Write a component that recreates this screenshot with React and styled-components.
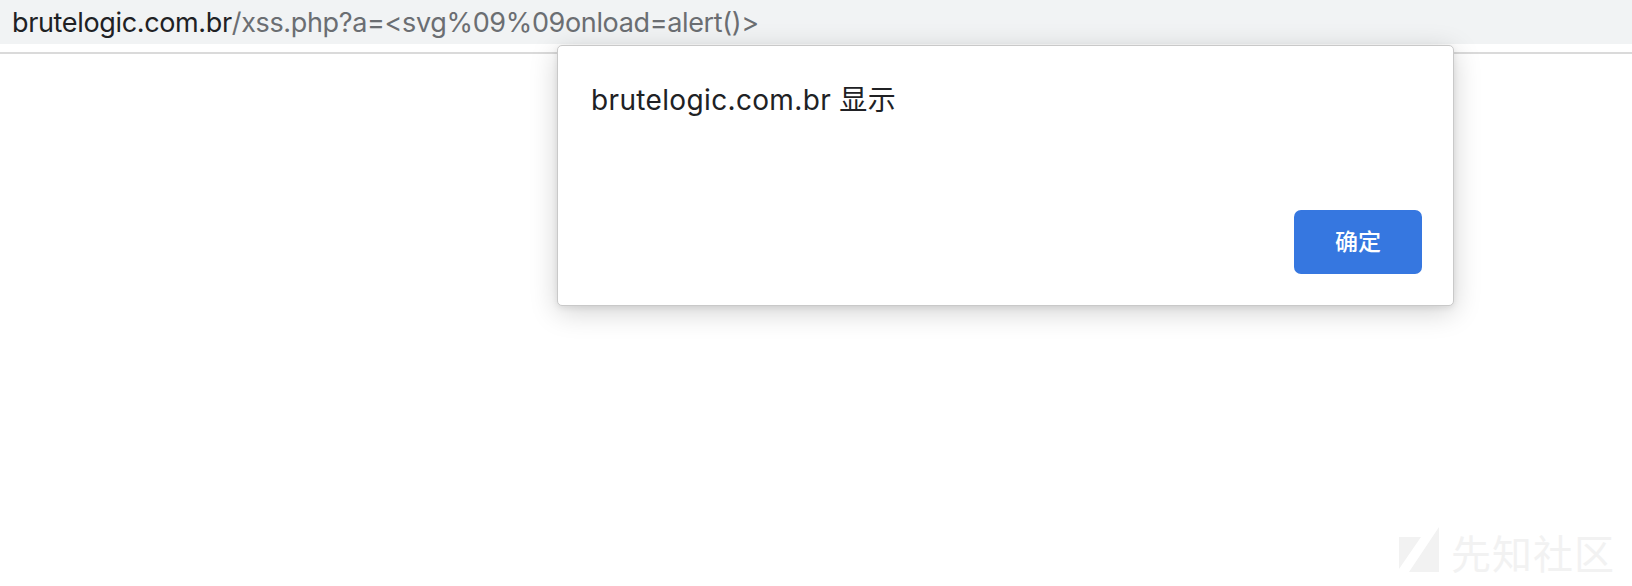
import React from 'react';
import styled, { createGlobalStyle } from 'styled-components';

const GlobalStyle = createGlobalStyle`
    html, body {
        margin: 0;
        padding: 0;
        background: #ffffff;
    }
    body {
        width: 1632px;
        height: 586px;
        overflow: hidden;
        font-family: Inter, "Noto Sans CJK SC", sans-serif;
    }
`;

const Page = styled.div`
    position: relative;
    width: 1632px;
    height: 586px;
    display: flex;
    flex-direction: column;
`;

const AddressBar = styled.div`
    height: 44px;
    background: #f1f3f4;
    display: flex;
    align-items: center;
    padding-left: 12px;
    font-size: 27px;
    letter-spacing: -0.35px;
    color: #6b6e72;
    white-space: nowrap;
`;

const Host = styled.span`
    color: #202124;
`;

const Divider = styled.div`
    margin-top: 8px;
    height: 2px;
    background: #dadada;
`;

const Dialog = styled.div`
    position: absolute;
    left: 557px;
    top: 45px;
    width: 897px;
    height: 261px;
    box-sizing: border-box;
    background: #ffffff;
    border: 1px solid #c9c9c9;
    border-radius: 5px;
    box-shadow: 0 6px 28px rgba(0, 0, 0, 0.18), 0 2px 6px rgba(0, 0, 0, 0.08);
    padding: 37px 31px 31px 33px;
    display: flex;
    flex-direction: column;
    justify-content: space-between;
`;

const Title = styled.div`
    font-size: 28px;
    line-height: 34px;
    letter-spacing: 0.35px;
    color: #202124;
`;

const Actions = styled.div`
    display: flex;
    justify-content: flex-end;
`;

const OkButton = styled.button`
    width: 128px;
    height: 64px;
    padding: 0 0 5px;
    border: none;
    border-radius: 7px;
    background: #3677e0;
    color: #ffffff;
    font-family: "Noto Sans CJK SC", sans-serif;
    font-size: 23px;
    font-weight: 500;
    cursor: pointer;
`;

const Watermark = styled.div`
    position: absolute;
    right: 17px;
    bottom: 5px;
    display: flex;
    align-items: center;
    gap: 10px;
    color: #f2f2f2;
    font-family: "Noto Sans CJK SC", sans-serif;
    font-size: 40px;
    letter-spacing: 1px;
`;

function Logo() {
    return (
        <svg width="42" height="50" viewBox="0 0 42 50">
            <polygon points="0,10 22,10 0,42" fill="#f2f2f2" />
            <polygon points="40,0 40,45 10,45" fill="#f2f2f2" />
        </svg>
    );
}

export default function App() {
    return (
        <>
            <GlobalStyle />
            <Page>
                <AddressBar>
                    <Host>brutelogic.com.br</Host>/xss.php?a=&lt;svg%09%09onload=alert()&gt;
                </AddressBar>
                <Divider />
                <Dialog>
                    <Title>brutelogic.com.br 显示</Title>
                    <Actions>
                        <OkButton>确定</OkButton>
                    </Actions>
                </Dialog>
                <Watermark>
                    <Logo />
                    <span>先知社区</span>
                </Watermark>
            </Page>
        </>
    );
}
